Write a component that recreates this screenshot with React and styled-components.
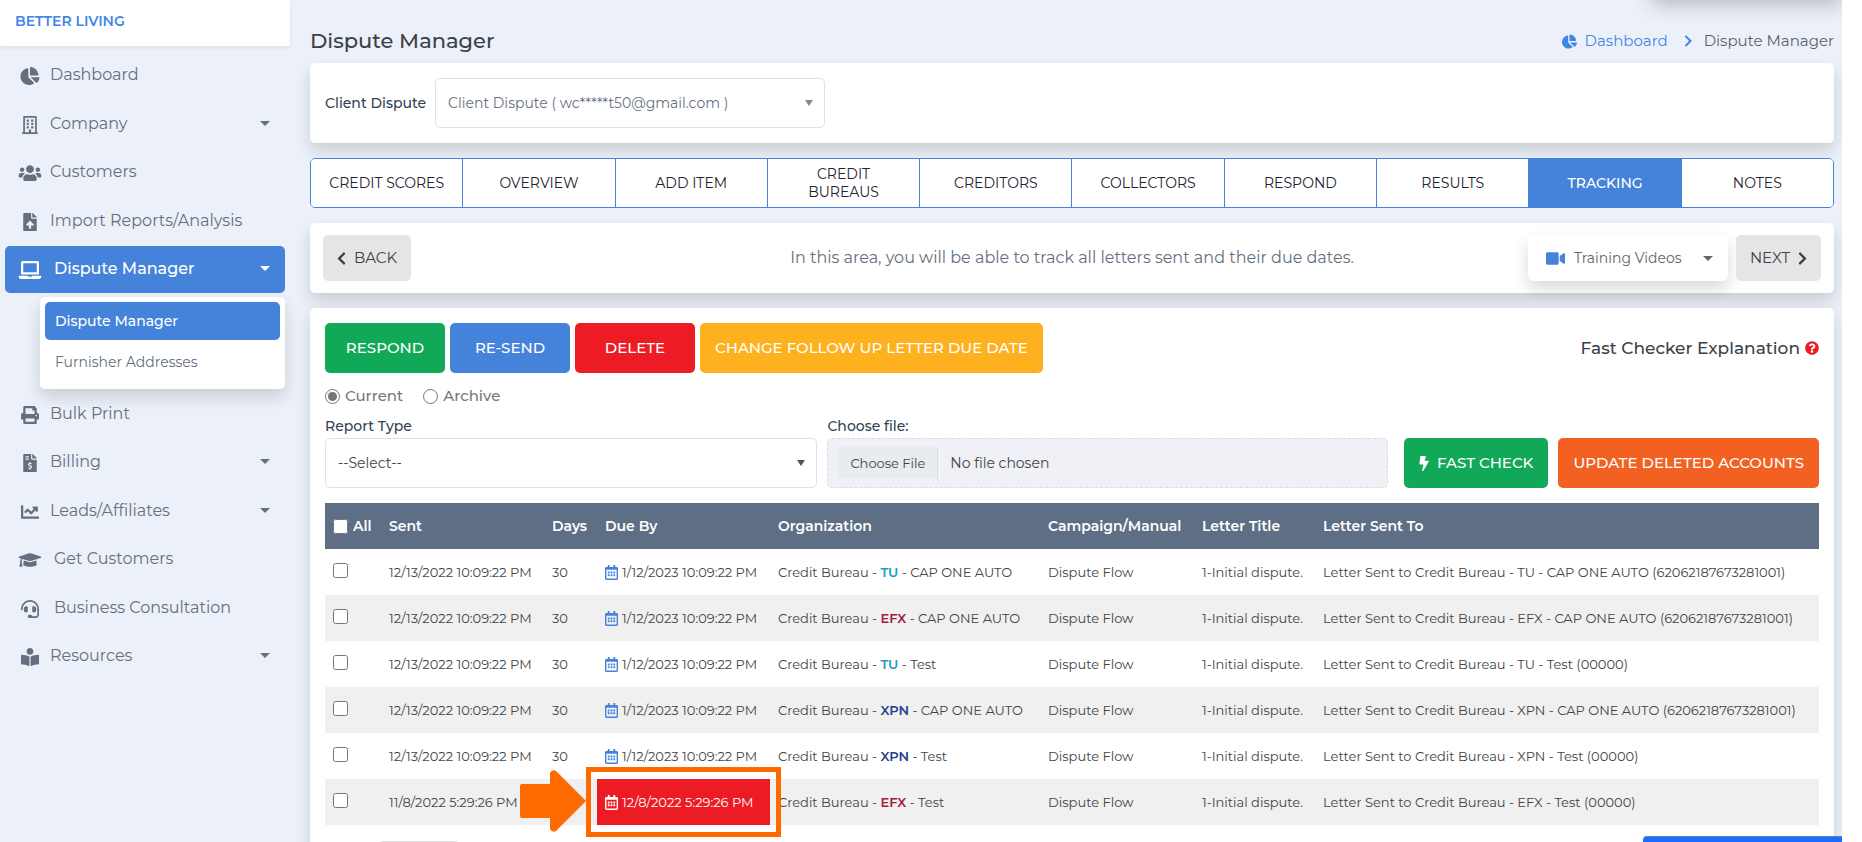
import React, { useState } from "react";
import styled, { createGlobalStyle } from "styled-components";
import {
  FaBolt,
  FaBookReader,
  FaChartLine,
  FaChartPie,
  FaChevronLeft,
  FaChevronRight,
  FaFileInvoiceDollar,
  FaFileUpload,
  FaGraduationCap,
  FaHeadset,
  FaLaptop,
  FaPrint,
  FaQuestionCircle,
  FaRegBuilding,
  FaRegCalendarAlt,
  FaUsers,
  FaVideo,
} from "react-icons/fa";

const menu = [
  { label: "Dashboard", icon: FaChartPie },
  { label: "Company", icon: FaRegBuilding, caret: true },
  { label: "Customers", icon: FaUsers },
  { label: "Import Reports/Analysis", icon: FaFileUpload },
  {
    label: "Dispute Manager",
    icon: FaLaptop,
    caret: true,
    active: true,
    wide: true,
    children: ["Dispute Manager", "Furnisher Addresses"],
  },
  { label: "Bulk Print", icon: FaPrint },
  { label: "Billing", icon: FaFileInvoiceDollar, caret: true },
  { label: "Leads/Affiliates", icon: FaChartLine, caret: true },
  { label: "Get Customers", icon: FaGraduationCap, wide: true },
  { label: "Business Consultation", icon: FaHeadset, wide: true },
  { label: "Resources", icon: FaBookReader, caret: true },
];

const tabs = [
  "Credit Scores",
  "Overview",
  "Add Item",
  "Credit Bureaus",
  "Creditors",
  "Collectors",
  "Respond",
  "Results",
  "Tracking",
  "Notes",
];

const bureauColors = { TU: "#1b9cc6", EFX: "#a01c3c", XPN: "#27408b" };

const sent = "12/13/2022 10:09:22 PM";
const due = "1/12/2023 10:09:22 PM";

const letters = [
  { sent, days: 30, due, bureau: "TU", account: "CAP ONE AUTO", number: "62062187673281001" },
  { sent, days: 30, due, bureau: "EFX", account: "CAP ONE AUTO", number: "62062187673281001" },
  { sent, days: 30, due, bureau: "TU", account: "Test", number: "00000" },
  { sent, days: 30, due, bureau: "XPN", account: "CAP ONE AUTO", number: "62062187673281001" },
  { sent, days: 30, due, bureau: "XPN", account: "Test", number: "00000" },
  {
    sent: "11/8/2022 5:29:26 PM",
    days: 30,
    due: "12/8/2022 5:29:26 PM",
    bureau: "EFX",
    account: "Test",
    number: "00000",
    overdue: true,
  },
];

const Sidebar = () => (
  <Aside>
    <Brand href="#">BETTER LIVING</Brand>
    <Menu>
      {menu.map(({ label, icon: Icon, caret, active, wide, children }) => (
        <MenuItem key={label}>
          <MenuLink href="#" $active={active}>
            <MenuIcon $wide={wide}>
              <Icon />
            </MenuIcon>
            {label}
            {caret && <Caret />}
          </MenuLink>
          {children && (
            <SubMenu>
              {children.map((child, index) => (
                <li key={child}>
                  <SubLink href="#" $active={index === 0}>
                    {child}
                  </SubLink>
                </li>
              ))}
            </SubMenu>
          )}
        </MenuItem>
      ))}
    </Menu>
  </Aside>
);

const LettersTable = () => (
  <Table>
    <colgroup>
      <Col $width={56} />
      <Col $width={163} />
      <Col $width={53} />
      <Col $width={173} />
      <Col $width={270} />
      <Col $width={154} />
      <Col $width={121} />
      <col />
    </colgroup>
    <thead>
      <tr>
        <Th>
          <AllLabel>
            <Checkbox type="checkbox" />
            All
          </AllLabel>
        </Th>
        <Th>Sent</Th>
        <Th>Days</Th>
        <Th>Due By</Th>
        <Th>Organization</Th>
        <Th>Campaign/Manual</Th>
        <Th>Letter Title</Th>
        <Th>Letter Sent To</Th>
      </tr>
    </thead>
    <tbody>
      {letters.map((letter, index) => (
        <Row key={index}>
          <Td>
            <Checkbox type="checkbox" aria-label={`Select letter ${index + 1}`} />
          </Td>
          <Td>{letter.sent}</Td>
          <Td>{letter.days}</Td>
          <Td $overdue={letter.overdue}>
            <DueDate $overdue={letter.overdue}>
              <FaRegCalendarAlt />
              {letter.due}
            </DueDate>
            {letter.overdue && (
              <Highlight>
                <Arrow viewBox="0 0 66 62" aria-hidden="true">
                  <path d="M2 14h28V3q2-4 6-2l30 30-30 30q-4 2-6-2V48H2q-2 0-2-2V16q0-2 2-2z" />
                </Arrow>
              </Highlight>
            )}
          </Td>
          <Td>
            Credit Bureau - <Bureau $name={letter.bureau}>{letter.bureau}</Bureau> - {letter.account}
          </Td>
          <Td>Dispute Flow</Td>
          <Td>1-Initial dispute.</Td>
          <Td>
            Letter Sent to Credit Bureau - {letter.bureau} - {letter.account} ({letter.number})
          </Td>
        </Row>
      ))}
    </tbody>
  </Table>
);

export default function App() {
  const [view, setView] = useState("current");

  return (
    <>
      <GlobalStyle />
      <Page>
        <Sidebar />
        <Main>
          <HelpPanel />
          <Header>
            <Title>Dispute Manager</Title>
            <Breadcrumb>
              <a href="#">
                <FaChartPie />
                Dashboard
              </a>
              <Separator viewBox="0 0 8 12" aria-hidden="true">
                <path d="M1.500 1l5 5-5 5" />
              </Separator>
              <span>Dispute Manager</span>
            </Breadcrumb>
          </Header>

          <ClientCard>
            <Label htmlFor="client">Client Dispute</Label>
            <SelectBox $width="390px" $caret="#888888">
              <Select id="client" $muted>
                <option>Client Dispute ( wc*****t50@gmail.com )</option>
              </Select>
            </SelectBox>
          </ClientCard>

          <Tabs>
            {tabs.map((tab) => (
              <Tab key={tab} type="button" $active={tab === "Tracking"}>
                {tab}
              </Tab>
            ))}
          </Tabs>

          <StepCard>
            <StepSide>
              <StepButton type="button">
                <FaChevronLeft />
                BACK
              </StepButton>
            </StepSide>
            <StepText>In this area, you will be able to track all letters sent and their due dates.</StepText>
            <StepSide $end>
              <VideosButton type="button">
                <FaVideo />
                Training Videos
                <Caret />
              </VideosButton>
              <StepButton type="button">
                NEXT
                <FaChevronRight />
              </StepButton>
            </StepSide>
          </StepCard>

          <TrackingCard>
            <Actions>
              <Button type="button" $color="#11a957">RESPOND</Button>
              <Button type="button" $color="#4583da">RE-SEND</Button>
              <Button type="button" $color="#ed1c24">DELETE</Button>
              <Button type="button" $color="#fdb11e">CHANGE FOLLOW UP LETTER DUE DATE</Button>
              <Explanation>
                Fast Checker Explanation
                <FaQuestionCircle />
              </Explanation>
            </Actions>

            <Views>
              <RadioLabel>
                <Radio
                  type="radio"
                  name="view"
                  checked={view === "current"}
                  onChange={() => setView("current")}
                />
                Current
              </RadioLabel>
              <RadioLabel>
                <Radio
                  type="radio"
                  name="view"
                  checked={view === "archive"}
                  onChange={() => setView("archive")}
                />
                Archive
              </RadioLabel>
            </Views>

            <Filters>
              <Field $grow={491}>
                <Label htmlFor="report">Report Type</Label>
                <SelectBox $width="100%" $caret="#555555">
                  <Select id="report">
                    <option>--Select--</option>
                  </Select>
                </SelectBox>
              </Field>
              <Field $grow={559}>
                <Label htmlFor="file">Choose file:</Label>
                <FileInput id="file" type="file" />
              </Field>
              <CheckButtons>
                <Button type="button" $color="#11a957">
                  <FaBolt />
                  FAST CHECK
                </Button>
                <Button type="button" $color="#f26122">UPDATE DELETED ACCOUNTS</Button>
              </CheckButtons>
            </Filters>

            <LettersTable />

            <PageSize aria-label="Rows per page">
              <option>10</option>
            </PageSize>
          </TrackingCard>
          <ChatBar type="button" aria-label="Open chat" />
        </Main>
      </Page>
    </>
  );
}

const GlobalStyle = createGlobalStyle`
  * {
    box-sizing: border-box;
  }

  body {
    margin: 0;
    background: #ffffff;
    color: #444444;
    font-family: Montserrat, Inter, "Open Sans", sans-serif;
    font-size: 14px;
    line-height: 18px;
  }

  button,
  input,
  select {
    font: inherit;
    color: inherit;
  }

  a {
    text-decoration: none;
  }

  svg {
    flex-shrink: 0;
  }
`;

const Page = styled.div`
  display: flex;
  height: 100vh;
  margin-right: 20px;
  overflow: hidden;
  background: #ecf1f9;
`;

const Aside = styled.aside`
  flex: 0 0 290px;
  background: #ecf1f9;
  z-index: 1;
`;

const Brand = styled.a`
  display: block;
  height: 46px;
  padding: 12px 15px;
  background: #ffffff;
  box-shadow: 0 2px 4px rgba(0, 0, 0, 0.08);
  color: #3f86e8;
  font-weight: 600;
`;

const Menu = styled.ul`
  margin: 0;
  padding: 6px 5px;
  list-style: none;
`;

const MenuItem = styled.li`
  margin-bottom: 1px;
  &:nth-child(odd) {
    margin-bottom: 2px;
  }
`;

const MenuLink = styled.a`
  display: flex;
  align-items: center;
  height: 47px;
  padding: 0 15px 2px 13px;
  border-radius: 5px;
  background: ${(props) => (props.$active ? "#4583da" : "transparent")};
  color: ${(props) => (props.$active ? "#ffffff" : "#64707f")};
  font-size: 16px;
  font-weight: ${(props) => (props.$active ? 500 : 400)};
`;

const MenuIcon = styled.span`
  display: flex;
  margin-right: ${(props) => (props.$wide ? 12 : 8)}px;
  padding-top: 3px;

  svg {
    width: 24px;
    height: 18px;
    color: ${(props) => (props.$active ? "#ffffff" : "inherit")};
  }
`;

const Caret = styled.span`
  margin-left: auto;
  border: 5px solid transparent;
  border-top-color: currentColor;
  border-bottom: 0;
`;

const SubMenu = styled.ul`
  margin: 4px 0 0 35px;
  padding: 5px;
  border-radius: 5px;
  background: #ffffff;
  box-shadow: 0 8px 16px rgba(0, 0, 0, 0.15);
  list-style: none;
`;

const SubLink = styled.a`
  display: block;
  margin-bottom: 3px;
  padding: 10px;
  border-radius: 5px;
  background: ${(props) => (props.$active ? "#4583da" : "transparent")};
  color: ${(props) => (props.$active ? "#ffffff" : "#64707f")};
  font-weight: ${(props) => (props.$active ? 500 : 400)};
`;

const Main = styled.main`
  position: relative;
  display: flex;
  flex: 1;
  flex-direction: column;
  gap: 15px;
  min-width: 0;
  padding: 0 8px 0 20px;
`;

const HelpPanel = styled.div`
  position: absolute;
  right: 0;
  bottom: 100%;
  width: 190px;
  height: 40px;
  box-shadow: 0 4px 20px rgba(0, 0, 0, 0.25);
`;

const Header = styled.header`
  display: flex;
  align-items: center;
  justify-content: space-between;
  height: 48px;
  padding-top: 34px;
`;

const Title = styled.h1`
  margin: 0;
  color: #3b4149;
  font-size: 21px;
  font-weight: 500;
  line-height: 28px;
`;

const Breadcrumb = styled.nav`
  display: flex;
  align-items: center;
  color: #5c6068;
  font-size: 15px;

  a {
    display: flex;
    align-items: center;
    gap: 8px;
    color: #3f86e8;
  }
`;

const Separator = styled.svg`
  width: 8px;
  height: 12px;
  margin: 0 12px 0 16px;
  fill: none;
  stroke: #3f86e8;
  stroke-width: 2;
`;

const Card = styled.section`
  border-radius: 5px;
  background: #ffffff;
  box-shadow: 0 8px 16px rgba(0, 0, 0, 0.15);
`;

const ClientCard = styled(Card)`
  display: flex;
  align-items: center;
  gap: 9px;
  padding: 15px;
`;

const Label = styled.label`
  color: #323f55;
  font-size: 14px;
  font-weight: 500;
`;

const SelectBox = styled.div`
  display: grid;
  align-items: center;
  width: ${(props) => props.$width};

  &::after {
    content: "";
    grid-area: 1 / 1;
    justify-self: end;
    margin-right: 12px;
    border: 4px solid transparent;
    border-top: 6px solid ${(props) => props.$caret};
    border-bottom: 0;
    pointer-events: none;
  }
`;

const Select = styled.select`
  grid-area: 1 / 1;
  width: 100%;
  height: 50px;
  padding: 0 12px;
  border: 1px solid #dee2e6;
  border-radius: 5px;
  appearance: none;
  background: #ffffff;
  color: ${(props) => (props.$muted ? "#64707f" : "#444444")};
`;

const Tabs = styled.nav`
  display: flex;
  flex-shrink: 0;
  height: 50px;
  border: 1px solid #4583da;
  border-radius: 5px;
  overflow: hidden;
  z-index: 1;
`;

const Tab = styled.button`
  flex: 1 1 0;
  padding: 0 15px;
  border: 0;
  border-left: 1px solid #4583da;
  background: ${(props) => (props.$active ? "#4583da" : "#ffffff")};
  color: ${(props) => (props.$active ? "#ffffff" : "#23232f")};
  font-weight: ${(props) => (props.$active ? 500 : 400)};
  text-transform: uppercase;
  cursor: pointer;

  &:first-child {
    border-left: 0;
  }
`;

const StepCard = styled(Card)`
  display: grid;
  grid-template-columns: 1fr auto 1fr;
  align-items: center;
  padding: 12px 13px;
`;

const StepSide = styled.div`
  display: flex;
  justify-content: ${(props) => (props.$end ? "flex-end" : "flex-start")};
  gap: 8px;
`;

const StepButton = styled.button`
  display: flex;
  align-items: center;
  gap: 8px;
  height: 46px;
  padding: 0 14px;
  border: 0;
  border-radius: 5px;
  background: #e5e5e5;
  color: #3b4149;
  font-size: 15px;
  cursor: pointer;

  svg {
    width: 9px;
    height: 15px;
  }
`;

const StepText = styled.p`
  margin: 0;
  color: #64707f;
  font-size: 16px;
  text-align: center;
`;

const VideosButton = styled.button`
  display: flex;
  align-items: center;
  width: 200px;
  height: 46px;
  padding: 0 15px 0 18px;
  border: 0;
  border-radius: 5px;
  background: #ffffff;
  box-shadow: 0 8px 16px rgba(0, 0, 0, 0.15);
  color: #666666;
  cursor: pointer;

  svg {
    width: 19px;
    height: 17px;
    margin-right: 9px;
    color: #4583da;
  }
`;

const TrackingCard = styled(Card)`
  flex: 1 0 auto;
  padding: 15px;
`;

const Actions = styled.div`
  display: flex;
  gap: 5px;
`;

const Button = styled.button`
  display: flex;
  align-items: center;
  justify-content: center;
  gap: 8px;
  min-width: 120px;
  height: 50px;
  padding: 0 15px;
  border: 0;
  border-radius: 5px;
  background: ${(props) => props.$color};
  color: #ffffff;
  font-size: 15px;
  font-weight: 500;
  white-space: nowrap;
  cursor: pointer;

  svg {
    width: 10px;
    height: 15px;
  }
`;

const Explanation = styled.div`
  display: flex;
  align-items: center;
  gap: 5px;
  margin-left: auto;
  color: #3b4149;
  font-size: 17px;
  font-weight: 500;

  svg {
    color: #ed1c24;
    font-size: 14px;
  }
`;

const Views = styled.div`
  display: flex;
  gap: 20px;
  margin: 14px 0 12px;
`;

const RadioLabel = styled.label`
  display: flex;
  align-items: center;
  gap: 5px;
  color: #777777;
  font-size: 15px;
  font-weight: 500;
`;

const Radio = styled.input`
  width: 15px;
  height: 15px;
  margin: 0;
  accent-color: #767676;
`;

const Filters = styled.div`
  display: flex;
  align-items: flex-end;
  gap: 10px;
  margin-bottom: 15px;
`;

const Field = styled.div`
  display: flex;
  flex: ${(props) => props.$grow} 1 0;
  flex-direction: column;
  gap: 3px;
  min-width: 0;
`;

const FileInput = styled.input`
  width: 100%;
  height: 50px;
  padding: 8px 10px;
  border: 1px dashed #d9dce1;
  border-radius: 5px;
  background: #eff1f6;

  &::file-selector-button {
    height: 32px;
    margin-right: 12px;
    padding: 0 12px;
    border: 0;
    border-right: 1px solid #d9dce1;
    background: #e9ecef;
    color: inherit;
    font: inherit;
    font-size: 13px;
  }
`;

const CheckButtons = styled.div`
  display: flex;
  gap: 10px;
  margin-left: 6px;
`;

const Table = styled.table`
  width: 100%;
  table-layout: fixed;
  border-collapse: collapse;
`;

const Col = styled.col`
  width: ${(props) => props.$width}px;
`;

const Th = styled.th`
  height: 46px;
  padding: 0 8px;
  background: #5e6e84;
  color: #ffffff;
  font-weight: 600;
  text-align: left;
  white-space: nowrap;
`;

const Row = styled.tr`
  &:nth-child(even) {
    background: #f0f0f0;
  }
`;

const Td = styled.td`
  position: relative;
  height: 46px;
  padding: 0 8px;
  background: ${(props) => (props.$overdue ? "#ed1c24" : "transparent")};
  font-size: 13px;
  white-space: nowrap;
`;

const AllLabel = styled.label`
  display: flex;
  align-items: center;
  gap: 5px;
`;

const Checkbox = styled.input`
  width: 15px;
  height: 15px;
  margin: 0;
`;

const DueDate = styled.span`
  display: flex;
  align-items: center;
  gap: 4px;
  color: ${(props) => (props.$overdue ? "#ffffff" : "inherit")};

  svg {
    width: 13px;
    height: 15px;
    color: ${(props) => (props.$overdue ? "#ffffff" : "#4583da")};
  }
`;

// Frame drawn over the overdue cell, with its pointer on the left
const Highlight = styled.div`
  position: absolute;
  inset: -12px -11px;
  border: 5px solid #ff6a00;
  z-index: 1;
`;

const Arrow = styled.svg`
  position: absolute;
  top: -2px;
  right: calc(100% + 5px);
  width: 66px;
  height: 62px;
  fill: #ff6a00;
`;

const Bureau = styled.b`
  color: ${(props) => bureauColors[props.$name]};
  font-weight: 600;
`;

const PageSize = styled.select`
  display: block;
  width: 80px;
  height: 30px;
  margin: 16px 0 0 54px;
  border: 1px solid #d9dce1;
  border-radius: 4px;
  background: #ffffff;
`;

const ChatBar = styled.button`
  position: fixed;
  right: 20px;
  bottom: 0;
  width: 199px;
  height: 6px;
  border: 0;
  border-top: 1px solid #5f87b5;
  border-radius: 4px 0 0 0;
  background: #1a6dff;
  z-index: 2;
`;
